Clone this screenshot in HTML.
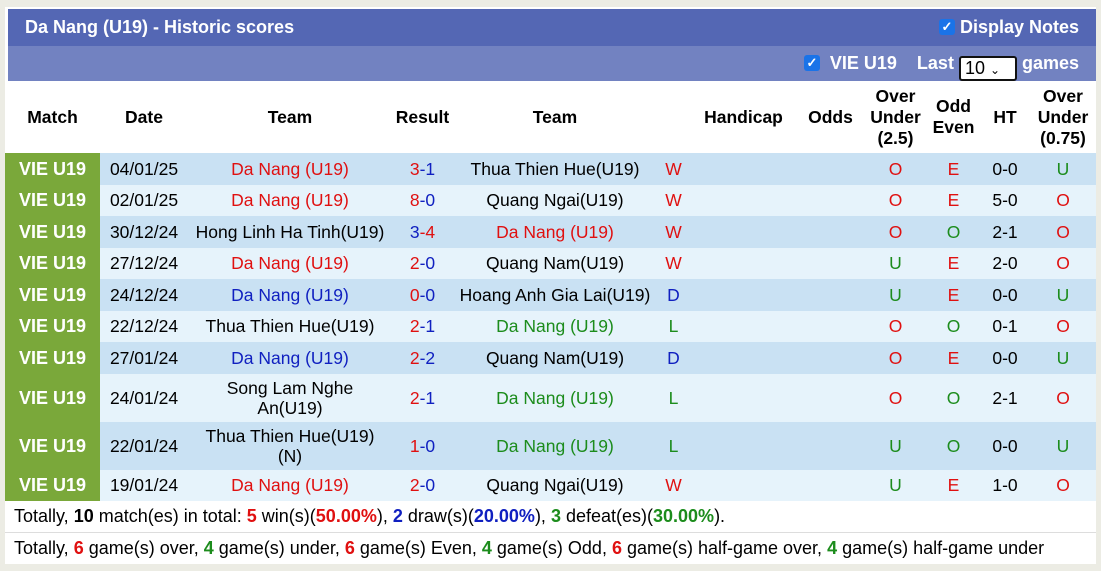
<!DOCTYPE html>
<html><head><meta charset="utf-8"><style>
body{margin:0;background:#ecece4;font-family:"Liberation Sans",Arial,sans-serif;}
#w{position:absolute;left:5px;top:7px;width:1091px;background:#fff;padding-top:2px}
.t1{height:37px;background:#5467b4;color:#fff;font-weight:bold;font-size:18px;line-height:36px;padding-left:17px;margin-left:3px;position:relative}
.t2{height:35px;background:#7282c1;color:#fff;font-weight:bold;font-size:18px;margin-left:3px;position:relative}
.cb{display:inline-block;width:16px;height:16px;background:#1a73e8;border-radius:3px;color:#fff;font-size:13px;line-height:16px;text-align:center;vertical-align:2px}
table{border-collapse:collapse;table-layout:fixed;width:1091px;font-size:17.5px}
th{font-weight:bold;height:72px;padding:0;line-height:21px;font-size:17.5px}
td{padding:0;text-align:center;height:31.5px;line-height:20px}
tr.a td{background:#c9e1f3}tr.b td{background:#e6f3fb}
td.m{background:#7aa83a!important;color:#fff;font-weight:bold;font-size:18px}
.r{color:#e01010}.g{color:#1c8c1c}.bl{color:#1020c0}
.f{font-size:18px;height:31px;line-height:31px;padding-left:9px}
</style></head><body><div id="w">
<div class="t1">Da Nang (U19) - Historic scores<span style="position:absolute;right:17px;top:0"><span class="cb">✓</span> Display Notes</span></div>
<div class="t2"><span style="position:absolute;right:17px;top:6px;line-height:22px"><span class="cb">✓</span>&nbsp; VIE U19 &nbsp;&nbsp; Last <span style="display:inline-block;border:2px solid #111;border-radius:3px;background:#fff;color:#000;font-weight:normal;width:58px;height:25px;line-height:21px;text-align:left;padding-left:4px;box-sizing:border-box;vertical-align:-5px;font-size:18px">10 <span style="font-size:12px">&#8964;</span></span> games</span></div>
<table>
<colgroup><col style="width:95px"><col style="width:88px"><col style="width:204px"><col style="width:61px"><col style="width:204px"><col style="width:33px"><col style="width:107px"><col style="width:67px"><col style="width:63px"><col style="width:53px"><col style="width:50px"><col style="width:66px"></colgroup>
<tr><th>Match</th><th>Date</th><th>Team</th><th>Result</th><th>Team</th><th></th><th>Handicap</th><th>Odds</th><th>Over<br>Under<br>(2.5)</th><th>Odd<br>Even</th><th>HT</th><th>Over<br>Under<br>(0.75)</th></tr>
<tr class="a"><td class="m">VIE U19</td><td>04/01/25</td><td class="r">Da Nang (U19)</td><td><span class="r">3</span><span class="bl">-1</span></td><td>Thua Thien Hue(U19)</td><td class="r">W</td><td></td><td></td><td class="r">O</td><td class="r">E</td><td>0-0</td><td class="g">U</td></tr>
<tr class="b"><td class="m">VIE U19</td><td>02/01/25</td><td class="r">Da Nang (U19)</td><td><span class="r">8</span><span class="bl">-0</span></td><td>Quang Ngai(U19)</td><td class="r">W</td><td></td><td></td><td class="r">O</td><td class="r">E</td><td>5-0</td><td class="r">O</td></tr>
<tr class="a"><td class="m">VIE U19</td><td>30/12/24</td><td>Hong Linh Ha Tinh(U19)</td><td><span class="bl">3</span><span class="r">-4</span></td><td class="r">Da Nang (U19)</td><td class="r">W</td><td></td><td></td><td class="r">O</td><td class="g">O</td><td>2-1</td><td class="r">O</td></tr>
<tr class="b"><td class="m">VIE U19</td><td>27/12/24</td><td class="r">Da Nang (U19)</td><td><span class="r">2</span><span class="bl">-0</span></td><td>Quang Nam(U19)</td><td class="r">W</td><td></td><td></td><td class="g">U</td><td class="r">E</td><td>2-0</td><td class="r">O</td></tr>
<tr class="a"><td class="m">VIE U19</td><td>24/12/24</td><td class="bl">Da Nang (U19)</td><td><span class="r">0</span><span class="bl">-0</span></td><td>Hoang Anh Gia Lai(U19)</td><td class="bl">D</td><td></td><td></td><td class="g">U</td><td class="r">E</td><td>0-0</td><td class="g">U</td></tr>
<tr class="b"><td class="m">VIE U19</td><td>22/12/24</td><td>Thua Thien Hue(U19)</td><td><span class="r">2</span><span class="bl">-1</span></td><td class="g">Da Nang (U19)</td><td class="g">L</td><td></td><td></td><td class="r">O</td><td class="g">O</td><td>0-1</td><td class="r">O</td></tr>
<tr class="a"><td class="m">VIE U19</td><td>27/01/24</td><td class="bl">Da Nang (U19)</td><td><span class="r">2</span><span class="bl">-2</span></td><td>Quang Nam(U19)</td><td class="bl">D</td><td></td><td></td><td class="r">O</td><td class="r">E</td><td>0-0</td><td class="g">U</td></tr>
<tr class="b"><td class="m" style="height:48px">VIE U19</td><td>24/01/24</td><td>Song Lam Nghe<br>An(U19)</td><td><span class="r">2</span><span class="bl">-1</span></td><td class="g">Da Nang (U19)</td><td class="g">L</td><td></td><td></td><td class="r">O</td><td class="g">O</td><td>2-1</td><td class="r">O</td></tr>
<tr class="a"><td class="m" style="height:48px">VIE U19</td><td>22/01/24</td><td>Thua Thien Hue(U19)<br>(N)</td><td><span class="r">1</span><span class="bl">-0</span></td><td class="g">Da Nang (U19)</td><td class="g">L</td><td></td><td></td><td class="g">U</td><td class="g">O</td><td>0-0</td><td class="g">U</td></tr>
<tr class="b"><td class="m">VIE U19</td><td>19/01/24</td><td class="r">Da Nang (U19)</td><td><span class="r">2</span><span class="bl">-0</span></td><td>Quang Ngai(U19)</td><td class="r">W</td><td></td><td></td><td class="g">U</td><td class="r">E</td><td>1-0</td><td class="r">O</td></tr>
</table>
<div class="f" style="border-bottom:1px solid #ddd">Totally, <b>10</b> match(es) in total: <b class="r">5</b> win(s)(<b class="r">50.00%</b>), <b class="bl">2</b> draw(s)(<b class="bl">20.00%</b>), <b class="g">3</b> defeat(es)(<b class="g">30.00%</b>).</div>
<div class="f">Totally, <b class="r">6</b> game(s) over, <b class="g">4</b> game(s) under, <b class="r">6</b> game(s) Even, <b class="g">4</b> game(s) Odd, <b class="r">6</b> game(s) half-game over, <b class="g">4</b> game(s) half-game under</div>
</div></body></html>
